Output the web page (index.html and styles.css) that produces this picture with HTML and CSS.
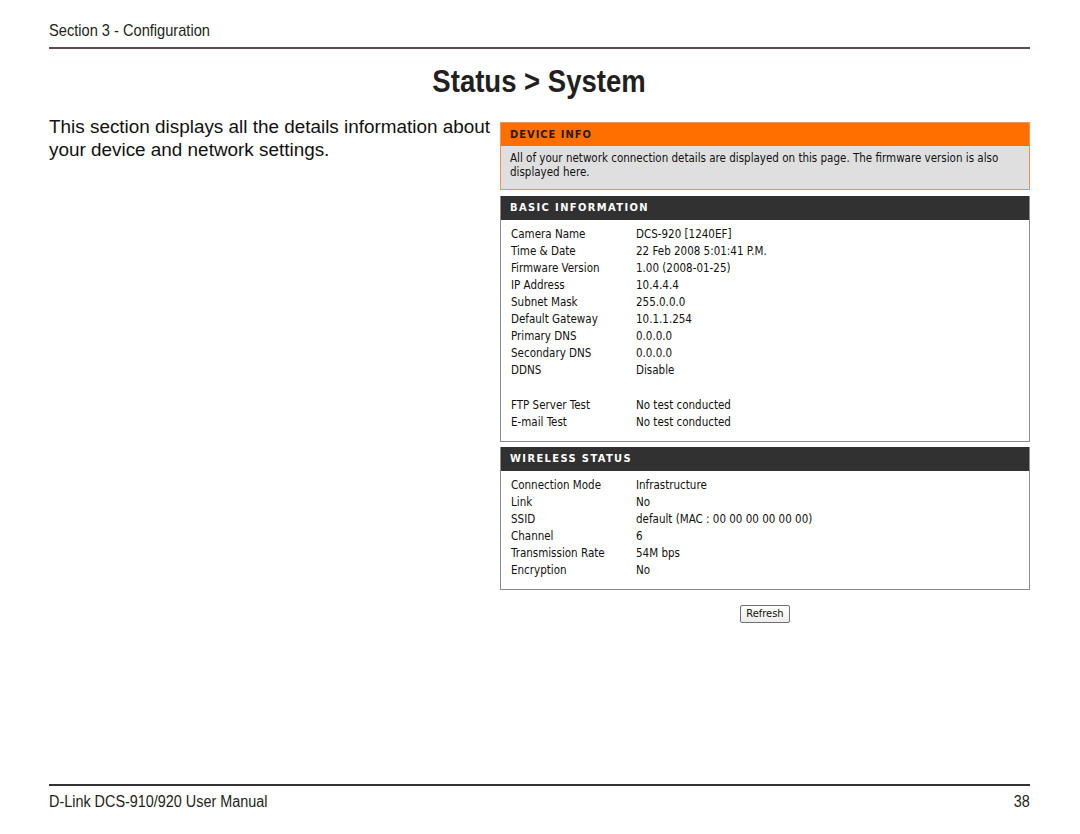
FILE: index.html
```html
<!DOCTYPE html>
<html>
<head>
<meta charset="utf-8">
<link rel="stylesheet" href="styles.css">
</head>
<body>
<div class="page">
  <header class="top">
    <span class="section cond">Section 3 - Configuration</span>
  </header>
  <h1 class="title"><span class="cond-c">Status &gt; System</span></h1>
  <div class="content">
    <p class="intro">This section displays all the details information about your device and network settings.</p>
    <div class="panel">
      <div class="box info">
        <div class="head orange">DEVICE INFO</div>
        <div class="info-body">All of your network connection details are displayed on this page. The firmware version is also displayed here.</div>
      </div>
      <div class="box dark-box">
        <div class="head dark">BASIC INFORMATION</div>
        <div class="rows">
          <div class="row"><span class="k">Camera Name</span><span>DCS-920 [1240EF]</span></div>
          <div class="row"><span class="k">Time &amp; Date</span><span>22 Feb 2008 5:01:41 P.M.</span></div>
          <div class="row"><span class="k">Firmware Version</span><span>1.00 (2008-01-25)</span></div>
          <div class="row"><span class="k">IP Address</span><span>10.4.4.4</span></div>
          <div class="row"><span class="k">Subnet Mask</span><span>255.0.0.0</span></div>
          <div class="row"><span class="k">Default Gateway</span><span>10.1.1.254</span></div>
          <div class="row"><span class="k">Primary DNS</span><span>0.0.0.0</span></div>
          <div class="row"><span class="k">Secondary DNS</span><span>0.0.0.0</span></div>
          <div class="row"><span class="k">DDNS</span><span>Disable</span></div>
          <div class="row spacer"></div>
          <div class="row"><span class="k">FTP Server Test</span><span>No test conducted</span></div>
          <div class="row"><span class="k">E-mail Test</span><span>No test conducted</span></div>
        </div>
      </div>
      <div class="box dark-box">
        <div class="head dark">WIRELESS STATUS</div>
        <div class="rows">
          <div class="row"><span class="k">Connection Mode</span><span>Infrastructure</span></div>
          <div class="row"><span class="k">Link</span><span>No</span></div>
          <div class="row"><span class="k">SSID</span><span>default (MAC : 00 00 00 00 00 00)</span></div>
          <div class="row"><span class="k">Channel</span><span>6</span></div>
          <div class="row"><span class="k">Transmission Rate</span><span>54M bps</span></div>
          <div class="row"><span class="k">Encryption</span><span>No</span></div>
        </div>
      </div>
      <div class="actions"><button class="btn">Refresh</button></div>
    </div>
  </div>
  <footer class="foot">
    <span class="cond">D-Link DCS-910/920 User Manual</span>
    <span class="cond-r">38</span>
  </footer>
</div>
</body>
</html>
```
FILE: styles.css
```css
html, body {
  margin: 0;
  padding: 0;
  background: #fff;
}
.page {
  width: 981px;
  height: 834px;
  margin-left: 49px;
  display: flex;
  flex-direction: column;
  font-family: "Liberation Sans", Arial, sans-serif;
  color: #231f20;
}
.cond, .cond-c, .cond-r {
  display: inline-block;
  white-space: nowrap;
}
.cond { transform-origin: left center; }
.cond-c { transform-origin: center center; }
.cond-r { transform-origin: right center; }
.top {
  height: 47px;
  border-bottom: 2px solid #5e4a4a;
}
.section {
  font-size: 17px;
  line-height: 20px;
  margin-top: 21px;
  transform: scaleX(0.86);
}
.title {
  margin: 0;
  text-align: center;
  font-weight: bold;
  font-size: 32px;
  line-height: 40px;
  padding-top: 12px;
  height: 64px;
  box-sizing: border-box;
  margin-bottom: 3px;
}
.title .cond-c {
  transform: scaleX(0.86);
}
.content {
  display: grid;
  grid-template-columns: 451px 530px;
  flex: 1;
}
.intro {
  margin: -1px 0 0;
  font-size: 18.9px;
  line-height: 23px;
  color: #111;
}
.panel {
  padding-top: 6px;
}
.box {
  font-family: "DejaVu Sans Condensed", "DejaVu Sans", sans-serif;
  font-stretch: condensed;
  font-size: 11.5px;
  margin-bottom: 6px;
}
.dark-box + .dark-box {
  margin-top: -1px;
}
.head {
  height: 24px;
  line-height: 24px;
  padding-left: 9px;
  font-weight: bold;
  font-size: 11px;
  letter-spacing: 1.4px;
}
.orange {
  background: #ff6f00;
  color: #2a1a10;
  letter-spacing: 1px;
}
.info {
  border: 1px solid #f0925a;
}
.info .head {
  height: 23px;
  line-height: 23px;
}
.info-body {
  background: #dfdfdf;
  color: #111;
  padding: 5px 20px 8px 9px;
  line-height: 14px;
  height: 30px;
}
.dark {
  background: #313131;
  color: #fff;
}
.dark-box {
  border: 1px solid #8c8c8c;
  border-top: 0;
}
.rows {
  padding: 6px 0 10px 10px;
  background: #fff;
}
.row {
  display: flex;
  height: 17px;
  line-height: 17px;
  color: #111;
}
.row.spacer {
  height: 18px;
}
.k {
  width: 125px;
}
.actions {
  text-align: center;
  padding-top: 7px;
}
.btn {
  font-family: "DejaVu Sans Condensed", "DejaVu Sans", sans-serif;
  font-stretch: condensed;
  font-size: 11px;
  height: 18px;
  padding: 0 5px;
  background: linear-gradient(#ffffff, #ececec);
  border: 1px solid #707070;
  border-radius: 2px;
  color: #111;
}
.foot {
  border-top: 2px solid #333;
  display: flex;
  justify-content: space-between;
  font-size: 16px;
  line-height: 18px;
  padding-top: 7px;
  height: 50px;
  box-sizing: border-box;
}
.foot .cond, .foot .cond-r {
  transform: scaleX(0.9);
}
```
